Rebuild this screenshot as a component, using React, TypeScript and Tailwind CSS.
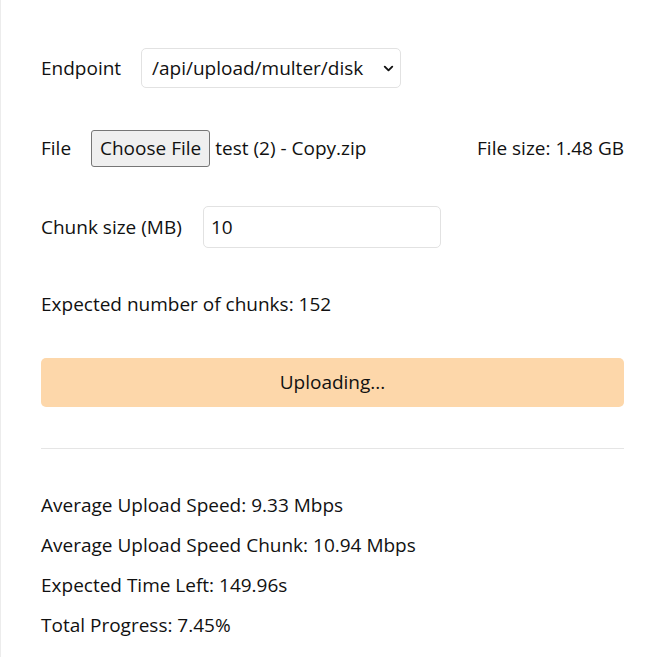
import React from 'react';
import { ChevronDown } from 'lucide-react';

const stats = [
  'Average Upload Speed: 9.33 Mbps',
  'Average Upload Speed Chunk: 10.94 Mbps',
  'Expected Time Left: 149.96s',
  'Total Progress: 7.45%',
];

export default function App() {
  return (
    <div
      className="min-h-[657px] w-[660px] border-l border-[#ececec] bg-white text-[19px] text-[#111] font-['Open_Sans',sans-serif]"
    >
      <div className="px-[40px] pt-[48px] w-[663px]">
        {/* Endpoint */}
        <div className="flex items-center h-[40px]">
          <span className="w-[100px]">Endpoint</span>
          <div className="flex items-center justify-between w-[260px] h-[40px] pl-[10px] pr-[4px] border border-[#e2e2e2] rounded-[5px]">
            <span>/api/upload/multer/disk</span>
            <ChevronDown className="w-[15px] h-[15px]" strokeWidth={3} />
          </div>
        </div>

        {/* File */}
        <div className="flex items-center h-[37px] mt-[42px]">
          <span className="w-[50px]">File</span>
          <button className="h-[37px] px-[8px] bg-[#efefef] border border-[#767676] rounded-[3px]">
            Choose File
          </button>
          <span className="ml-[5px]">test (2) - Copy.zip</span>
          <span className="ml-auto">File size: 1.48 GB</span>
        </div>

        {/* Chunk size */}
        <div className="flex items-center h-[42px] mt-[39px]">
          <span className="w-[162px]">Chunk size (MB)</span>
          <div className="flex items-center w-[238px] h-[42px] px-[7px] border border-[#e2e2e2] rounded-[5px]">
            10
          </div>
        </div>

        <div className="mt-[43px] h-[26px] flex items-center">Expected number of chunks: 152</div>

        <div className="mt-[41px] h-[49px] flex items-center justify-center rounded-[5px] bg-[#fdd7aa]">
          Uploading...
        </div>

        <div className="mt-[41px] border-t border-[#e5e5e5]" />

        <div className="mt-[43px] flex flex-col gap-[14px]">
          {stats.map((s) => (
            <div key={s} className="h-[26px] flex items-center">
              {s}
            </div>
          ))}
        </div>
      </div>
    </div>
  );
}
